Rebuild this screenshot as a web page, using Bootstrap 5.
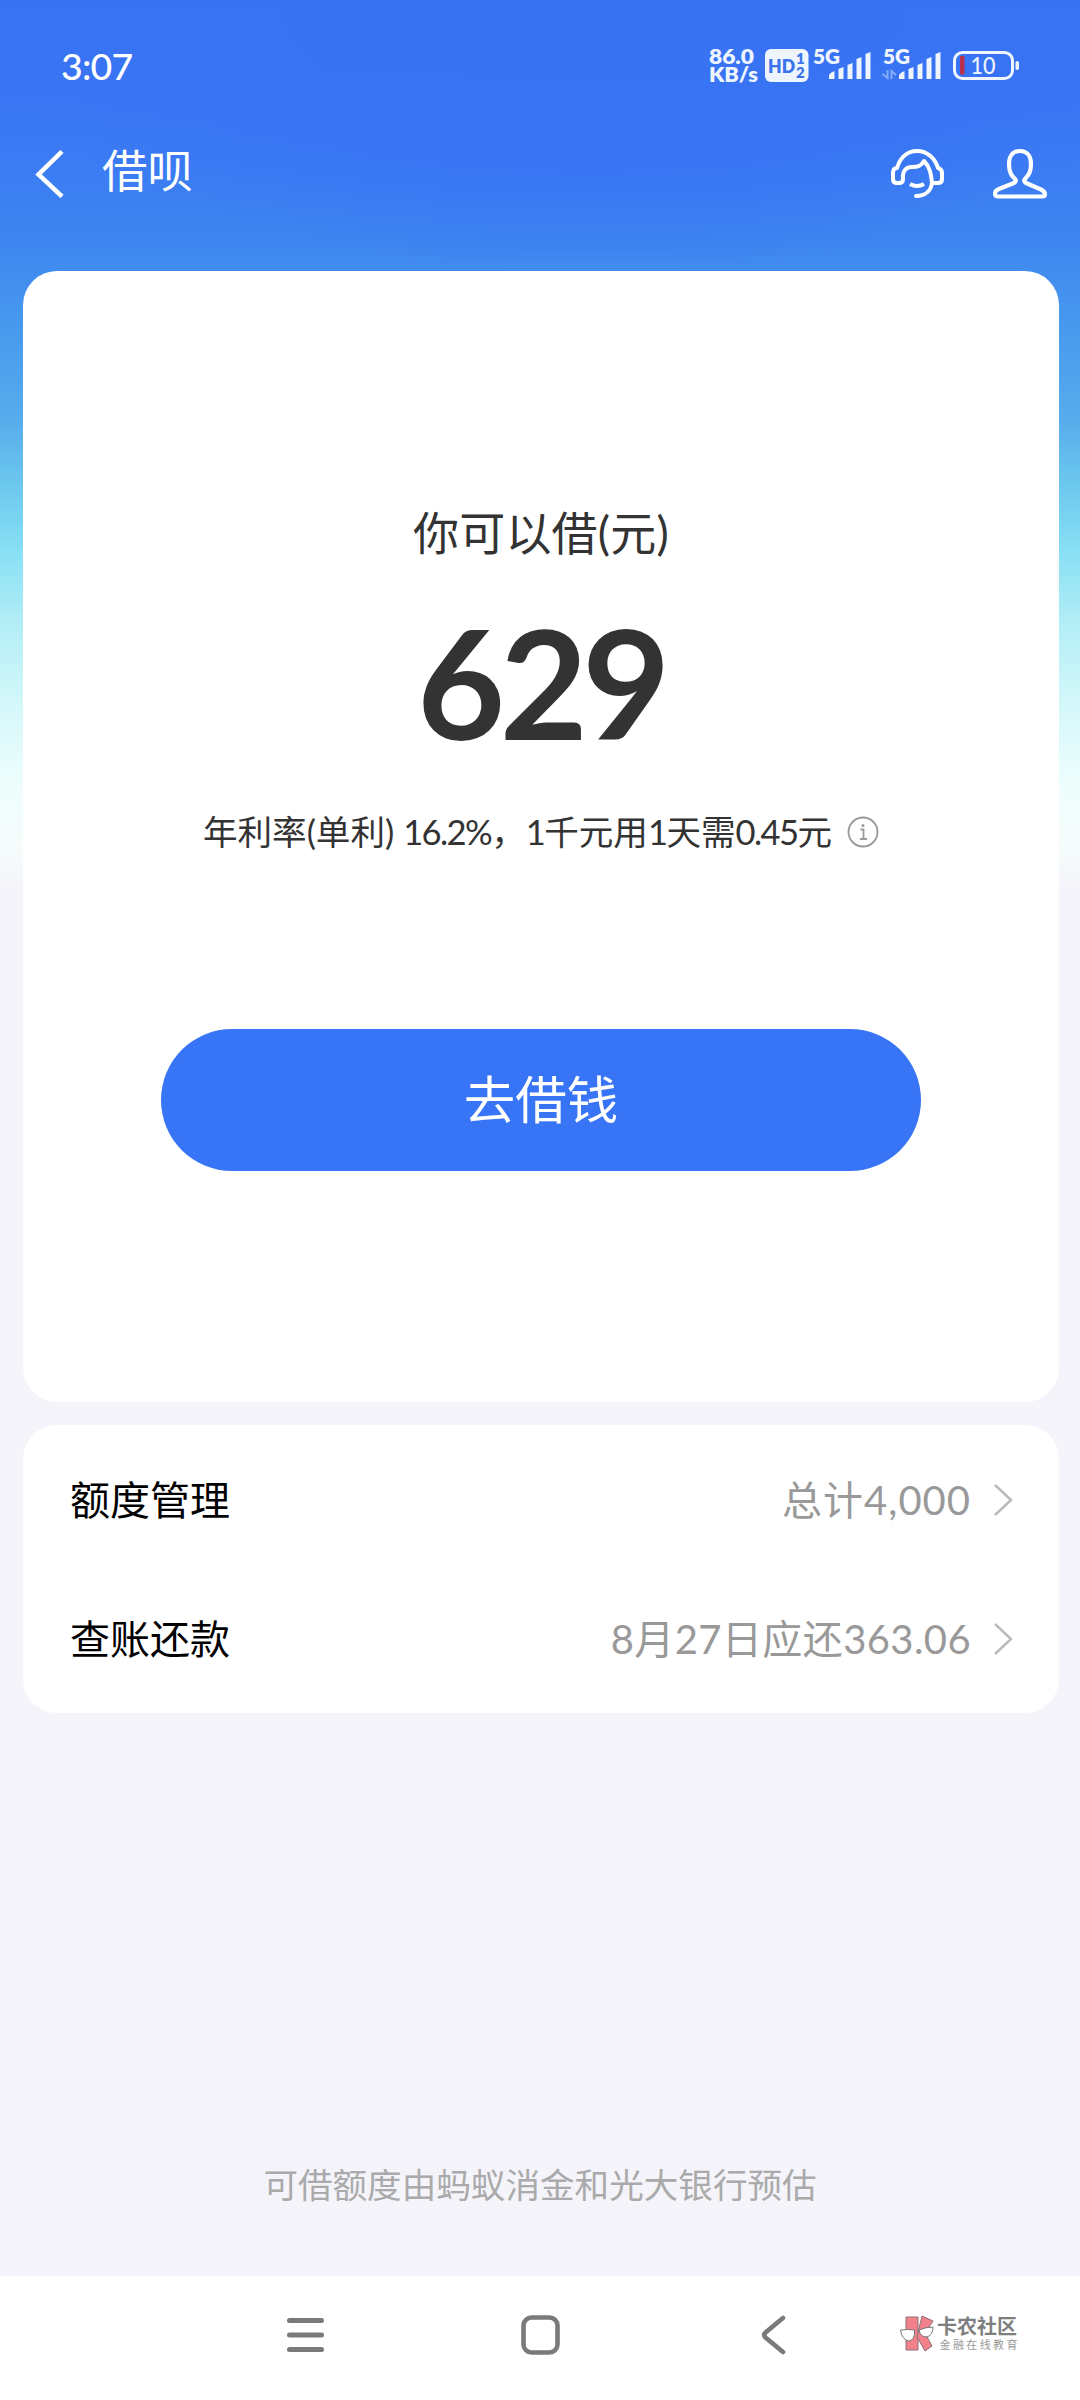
<!DOCTYPE html>
<html lang="zh-CN">
<head>
<meta charset="utf-8">
<meta name="viewport" content="width=device-width, initial-scale=1">
<title>借呗</title>
<link href="https://cdn.jsdelivr.net/npm/bootstrap@5.3.0/dist/css/bootstrap.min.css" rel="stylesheet">
<style>
body{font-family:Lato,"Noto Sans CJK SC",sans-serif;background:#f4f4fa;line-height:1;color:#333}
svg{display:block;flex:none}
.screen{height:2400px;background:
 radial-gradient(ellipse 620px 270px at 55% 0,#3873f4 0,rgba(56,115,244,.95) 50%,rgba(56,115,244,0) 100%) no-repeat,
 linear-gradient(180deg,#3873f4 0,#3974f4 70px,#3b7bf3 160px,#3e86f0 245px,#489aee 329px,#56acec 419px,#6cc8ee 486px,#88e0f4 552px,#b0ecf6 619px,#cdf6f9 686px,#ecfdfd 776px,#f6fdfc 843px,#f4f4fa 890px)}
.status{height:132px;padding:0 60px 0 61px}
.clock{font-size:37.5px;font-weight:500;letter-spacing:-.8px}
.titlebar{height:139px;padding:0 32px 56px 35px}
.ttl{font-size:45.5px;font-weight:400;padding-left:37px;line-height:60px;margin-top:-6px}
.panel{margin:0 21px 0 23px;border-radius:34px;background:#fff;border:0}
.quota{height:1131px;padding-top:228px}
.lead-in{font-size:46px;line-height:68px;letter-spacing:.2px}
.amount{font-size:152px;font-weight:700;line-height:152px;letter-spacing:-5.5px;margin-top:38px}
.rate{font-size:34.6px;line-height:50px;margin-top:50px;gap:15px}
.rate i{font-style:normal;letter-spacing:-1.6px}
.borrow{width:760px;height:142px;background:#3875f6;font-size:51.5px;margin-top:172px;color:#fff;border:0}
.rows{height:288px;margin-top:23px;padding:5px 46px 0 47px}
.item{height:139px;font-size:40px;background:none}
.item b{font-weight:400;color:#000}
.val{color:#999;gap:22px}
.val span{letter-spacing:.4px}
.val .total{letter-spacing:1px}
.note{font-size:34.6px;color:#aaa;line-height:50px;padding-bottom:66px}
.softkeys{height:124px;background:#fff;padding:0 60px 7px 287px}
.key-home{margin-left:197px}
.key-back{margin-left:201px}
</style>
<script src="https://cdn.jsdelivr.net/npm/bootstrap@5.3.0/dist/js/bootstrap.bundle.min.js"></script>
</head>
<body>
<div class="screen d-flex flex-column overflow-hidden">
 <header class="text-white">
  <div class="status d-flex justify-content-between align-items-center">
   <span class="clock">3:07</span>
   <svg width="311" height="56" viewBox="709 38 311 56" fill="#eef5ff" font-family="Lato,sans-serif" font-weight="800">
    <text x="709" y="64" font-size="20.5" textLength="45" lengthAdjust="spacingAndGlyphs">86.0</text>
    <text x="709" y="82" font-size="20" textLength="49" lengthAdjust="spacingAndGlyphs">KB/s</text>
    <rect x="765" y="49" width="43.500" height="33" rx="6"/>
    <g fill="#3b73ea"><text x="768" y="72.500" font-size="19" textLength="27" lengthAdjust="spacingAndGlyphs">HD</text><text x="796" y="64" font-size="15">1</text><text x="796" y="78" font-size="15">2</text></g>
    <text x="813" y="64" font-size="20" textLength="27" lengthAdjust="spacingAndGlyphs">5G</text>
    <path id="sig" d="M829 79v-4q2-3 5.500-4v8zM838.500 79v-10l5-2v12zM847.500 79v-14l5-2v16zM856.500 79v-20l5-2v22zM865.500 79v-25l5-2v27z"/>
    <text x="883" y="64" font-size="20" textLength="27" lengthAdjust="spacingAndGlyphs">5G</text>
    <use href="#sig" x="70"/>
    <path d="M887.500 70v8l-5-4M891.500 79v-8l4.500 4" fill="none" stroke="#84acf9" stroke-width="2"/>
    <rect x="954.500" y="52.500" width="58" height="26" rx="8" fill="none" stroke="#eef5ff" stroke-width="3"/>
    <rect x="960" y="56" width="4.500" height="18.500" rx="1" fill="#b92f4c"/><rect x="1015.500" y="61" width="3.500" height="9" rx="1.700"/>
    <text x="970.500" y="74" font-size="23.500" font-weight="500" textLength="25" lengthAdjust="spacingAndGlyphs">10</text>
   </svg>
  </div>
  <nav class="titlebar d-flex align-items-center">
   <svg width="30" height="48" viewBox="0 0 30 48" fill="none" stroke="#fff" stroke-width="4.500"><path d="M27 1.500 3.500 24.500 27 46.500"/></svg>
   <h1 class="ttl mb-0 me-auto">借呗</h1>
   <svg width="54" height="52" viewBox="891 148 54 52" fill="none" stroke="#fff" stroke-width="4" stroke-linecap="round" stroke-linejoin="round"><path d="M898 168C901 158 908 151 918 151S936 158 939 168M898 168q-4 0-4 5v6q0 4 4 4h2q4 0 4-4c-1-9 4-12 9-12 6 0 9-1 12-6 6 6 7 13 8 22M939 168q4 1 4 5v6q0 4-4 4h-6c-1 8-7 13-16 13"/><path d="M911 184q7 4 14 0" stroke-linecap="butt"/></svg>
   <svg class="ms-5" width="56" height="52" viewBox="992 148 56 52" fill="none" stroke="#fff" stroke-width="4.200" stroke-linejoin="round"><path d="M1020 151c8 0 11 6 11 13 0 9-3 11-6 15q-2 2 1 4l15 6.500q4 2 4 5 0 2-3 2h-44q-3 0-3-3 0-3 4-4.500l15-6q3-2 1-4c-3-3-6-6-6-15 0-7 3-13 11-13z"/></svg>
  </nav>
 </header>
 <main class="flex-grow-1 d-flex flex-column">
  <section class="panel quota card d-flex flex-column align-items-center">
   <div class="lead-in">你可以借(元)</div>
   <div class="amount">629</div>
   <div class="rate d-flex align-items-center"><span>年利率(单利) <i>16.2%</i>，<i>1</i>千元用<i>1</i>天需<i>0.45</i>元</span>
    <svg width="32" height="32" viewBox="0 0 32 32" fill="none" stroke="#999" stroke-width="1.800"><circle cx="16" cy="16" r="14.500"/><path d="M13.500 13.500H16.500V23M13 23h7"/><circle cx="16" cy="9.500" r="1.500" fill="#999" stroke="none"/></svg></div>
   <button type="button" class="btn borrow rounded-pill">去借钱</button>
  </section>
  <section class="panel rows">
   <div class="item d-flex justify-content-between align-items-center"><b>额度管理</b><div class="val d-flex align-items-center"><span class="total">总计4,000</span><svg width="20" height="32" fill="none" stroke="#bbb" stroke-width="2.500"><path d="M2 1 18 16 2 31"/></svg></div></div>
   <div class="item d-flex justify-content-between align-items-center"><b>查账还款</b><div class="val d-flex align-items-center"><span>8月27日应还363.06</span><svg width="20" height="32" fill="none" stroke="#bbb" stroke-width="2.500"><path d="M2 1 18 16 2 31"/></svg></div></div>
  </section>
  <p class="note text-center mt-auto mb-0">可借额度由蚂蚁消金和光大银行预估</p>
 </main>
 <footer class="softkeys d-flex align-items-center">
  <svg width="37" height="36" fill="none" stroke="#7a7a7a" stroke-width="5" stroke-linecap="round"><path d="M2.500 3.500h32M2.500 18h32M2.500 32.500h32"/></svg>
  <svg class="key-home" width="39" height="40" fill="none" stroke="#7a7a7a" stroke-width="4.600"><rect x="2.500" y="2.500" width="34" height="35" rx="8"/></svg>
  <svg class="key-back" width="25" height="40" fill="none" stroke="#7a7a7a" stroke-width="4.600" stroke-linecap="round"><path d="M22 3 4.500 17.500q-2.500 2.500 0 5L22 37"/></svg>
  <svg class="ms-auto" width="120" height="56" viewBox="900 2304 120 56" font-family="Noto Sans CJK SC,sans-serif"><g fill="#f27f8c" stroke="#8d7378" stroke-width="1"><path d="M906 2314h12v33h-12z"/><path d="M918 2329 922 2313 933 2318 925 2330 932 2343 925 2348 917 2334z"/></g><g fill="#fff" stroke="#777" stroke-width="1"><path d="M900.500 2327q7-1 14 0 1 10-6 11-7-2-8-11z"/><path d="M919 2327q7-3 14-3 0 8-6 10-7 0-8-7z"/></g><text x="937" y="2331" font-size="20" font-weight="700" fill="#7f7f7f" textLength="80" lengthAdjust="spacingAndGlyphs">卡农社区</text><text x="939.500" y="2345.500" font-size="11" fill="#999" textLength="78">金融在线教育</text></svg>
 </footer>
</div>
</body>
</html>
